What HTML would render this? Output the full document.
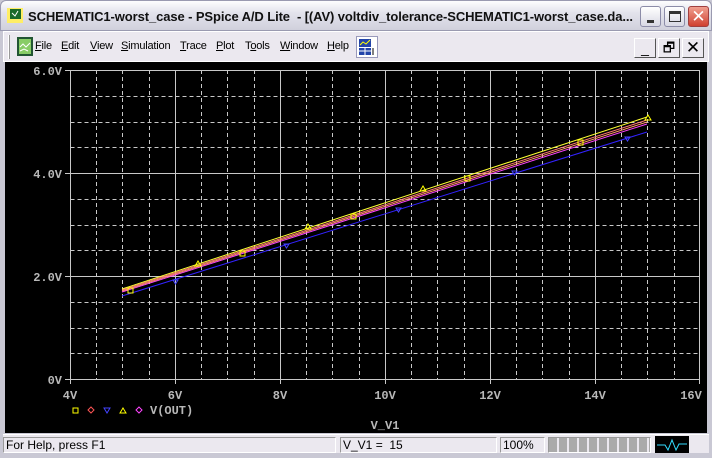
<!DOCTYPE html>
<html><head><meta charset="utf-8"><style>
*{margin:0;padding:0;box-sizing:border-box}
body{width:712px;height:456px;overflow:hidden;background:#c9c8d4;font-family:"Liberation Sans",sans-serif;position:relative}
.title{position:absolute;left:0;top:0;width:712px;height:31px;background:linear-gradient(#fdfdfe,#e3e3ec 40%,#d0d0dc);border-radius:6px 6px 0 0;border:1px solid #9a9ab0}
.title span{position:absolute;left:27px;top:8px;font-size:13px;font-weight:bold;color:#111;white-space:nowrap;letter-spacing:-0.1px}
.tb{position:absolute;top:5px;width:21px;height:21px;border:1px solid #8c8ca8;border-radius:3px;background:linear-gradient(#fff,#d8d8e4)}
.menu{position:absolute;left:3px;top:31px;width:706px;height:31px;background:#ebe8ef;border:1px solid #fff}
.menu .it{position:absolute;top:8px;font-size:11px;color:#000;letter-spacing:-0.2px}
.mb{position:absolute;top:6px;width:22px;height:20px;background:#ebe8ef;border:1px solid;border-color:#fff #555 #555 #fff;font-size:14px;text-align:center;line-height:18px}
.plot{position:absolute;left:5px;top:62px;width:702px;height:371px;background:#000}
.status{position:absolute;left:3px;top:434px;width:706px;height:19px;background:#ebe8ef;border-top:1px solid #fff}
.sp{position:absolute;top:2px;height:16px;border:1px solid;border-color:#999 #fff #fff #999;font-size:12px;padding-left:2px;line-height:14px}
</style></head><body>
<div class="title">
<svg style="position:absolute;left:6px;top:7px" width="18" height="17"><rect x="0" y="0" width="16" height="15" fill="#ffee66"/><rect x="3" y="1" width="11" height="10" fill="#1a6a2a"/><path d="M5 5l3 3 3-5" stroke="#fff" fill="none"/></svg>
<span>SCHEMATIC1-worst_case - PSpice A/D Lite&nbsp; - [(AV) voltdiv_tolerance-SCHEMATIC1-worst_case.da...</span>
<div class="tb" style="left:639px"><div style="position:absolute;left:6px;top:13px;width:7px;height:3px;background:#333"></div></div>
<div class="tb" style="left:663px"><div style="position:absolute;left:4px;top:4px;width:12px;height:11px;border:1px solid #333;border-top-width:3px"></div></div>
<div class="tb" style="left:687px;background:linear-gradient(#f0a090,#d04030);border-color:#a04040;color:#fff;font-size:17px;text-align:center;line-height:19px">✕</div>
</div>
<div class="menu">
<div style="position:absolute;left:4px;top:3px;width:2px;height:24px;border-left:1px solid #fff;border-right:1px solid #999"></div>
<svg style="position:absolute;left:13px;top:5px" width="18" height="20"><rect x="0" y="0" width="16" height="19" fill="#225533"/><rect x="2" y="2" width="12" height="15" fill="#88cc66"/><path d="M3 10l3-3 3 3 4-4M3 14l4-2 4 2" stroke="#fff" fill="none"/></svg>
<span class="it" style="left:31px"><u>F</u>ile</span>
<span class="it" style="left:57px"><u>E</u>dit</span>
<span class="it" style="left:86px"><u>V</u>iew</span>
<span class="it" style="left:117px"><u>S</u>imulation</span>
<span class="it" style="left:176px"><u>T</u>race</span>
<span class="it" style="left:212px"><u>P</u>lot</span>
<span class="it" style="left:241px">T<u>o</u>ols</span>
<span class="it" style="left:276px"><u>W</u>indow</span>
<span class="it" style="left:323px"><u>H</u>elp</span>
<div style="position:absolute;left:352px;top:4px;width:22px;height:22px;background:#fff;border:1px solid #99b"><svg width="20" height="20"><rect x="2" y="2" width="12" height="8" fill="#2244aa"/><path d="M3 8l3-3 3 2 4-4" stroke="#ff0" fill="none"/><rect x="2" y="11" width="12" height="7" fill="#2244aa"/><path d="M2 14h12M8 11v7" stroke="#fff"/><path d="M16 11v7" stroke="#000"/></svg></div>
<div class="mb" style="left:630px">_</div>
<div class="mb" style="left:654px;font-size:13px">🗗</div>
<div class="mb" style="left:678px;font-size:17px">✕</div>
</div>
<div class="plot">
<svg width="702" height="371" style="position:absolute;left:-5px;top:-62px;overflow:visible" font-family="Liberation Mono,monospace" font-weight="bold" font-size="12" fill="#b8b8b8">
<g stroke="#c8c8c8" stroke-dasharray="4,3" stroke-width="1">
<path d="M70.5 96.5H699M70.5 122.5H699M70.5 147.5H699M70.5 199.5H699M70.5 225.5H699M70.5 250.5H699M70.5 302.5H699M70.5 328.5H699M70.5 353.5H699"/>
<path d="M96.5 70V379M122.5 70V379M149.5 70V379M201.5 70V379M227.5 70V379M254.5 70V379M306.5 70V379M332.5 70V379M359.5 70V379M411.5 70V379M437.5 70V379M464.5 70V379M516.5 70V379M542.5 70V379M569.5 70V379M621.5 70V379M647.5 70V379M674.5 70V379"/>
</g>
<g stroke="#c8c8c8" stroke-width="1" fill="none">
<rect x="70.5" y="70.5" width="629" height="309"/>
<path d="M175.5 70V379M280.5 70V379M385.5 70V379M490.5 70V379M595.5 70V379M70 173.5H699M70 276.5H699"/>
<path d="M65 70.5H70M65 173.5H70M65 276.5H70M65 379.5H70M70.5 379V384M175.5 379V384M280.5 379V384M385.5 379V384M490.5 379V384M595.5 379V384M699.5 379V384"/>
</g>
<text x="62" y="75" text-anchor="end">6.0V</text>
<text x="62" y="178" text-anchor="end">4.0V</text>
<text x="62" y="281" text-anchor="end">2.0V</text>
<text x="62" y="384" text-anchor="end">0V</text>
<text x="70" y="399" text-anchor="middle">4V</text>
<text x="175" y="399" text-anchor="middle">6V</text>
<text x="280" y="399" text-anchor="middle">8V</text>
<text x="385" y="399" text-anchor="middle">10V</text>
<text x="490" y="399" text-anchor="middle">12V</text>
<text x="595" y="399" text-anchor="middle">14V</text>
<text x="691" y="399" text-anchor="middle">16V</text>
<text x="150" y="414">V(OUT)</text>
<text x="385" y="429" text-anchor="middle">V_V1</text>
<g fill="none" stroke-width="1">
<rect x="73" y="408" width="5" height="5" stroke="#ff0"/>
<path d="M91 407l3 3-3 3-3-3z" stroke="#f55"/>
<path d="M104 408h6l-3 5z" stroke="#44f"/>
<path d="M123 408l3 5h-6z" stroke="#ff0"/>
<path d="M139 407l3 3-3 3-3-3z" stroke="#f4f"/>
<path d="M122 296L647 132" stroke="#3322ff"/>
<path d="M122 292L647 124" stroke="#ff44ff"/>
<path d="M122 291L647 122" stroke="#ff9966"/>
<path d="M122 290L647 120" stroke="#ff7777"/>
<path d="M122 289L647 117" stroke="#ffff33"/>
<rect x="128" y="288" width="5" height="5" stroke="#ff0"/>
<rect x="240" y="251" width="5" height="5" stroke="#ff0"/>
<rect x="351" y="214" width="5" height="5" stroke="#ff0"/>
<rect x="465" y="176" width="5" height="5" stroke="#ff0"/>
<rect x="578" y="140" width="5" height="5" stroke="#ff0"/>
<path d="M195 266l3-5 3 5z" stroke="#ff0"/>
<path d="M305 229l3-5 3 5z" stroke="#ff0"/>
<path d="M420 191l3-5 3 5z" stroke="#ff0"/>
<path d="M645 120l3-5 3 5z" stroke="#ff0"/>
<path d="M173 280h5l-2.5 4z" stroke="#44f"/>
<path d="M284 244h5l-2.5 4z" stroke="#44f"/>
<path d="M396 208h5l-2.5 4z" stroke="#44f"/>
<path d="M512 171h5l-2.5 4z" stroke="#44f"/>
<path d="M625 137h5l-2.5 4z" stroke="#44f"/>
</g>
</svg>
</div>
<div class="status">
<div class="sp" style="left:0;width:333px">For Help, press F1</div>
<div class="sp" style="left:337px;width:157px">V_V1 =&nbsp; 15</div>
<div class="sp" style="left:497px;width:45px">100%</div>
<div class="sp" style="left:545px;width:103px;background:repeating-linear-gradient(90deg,#aaa 0 8px,#ebe8ef 8px 10px)"></div>
<div style="position:absolute;left:652px;top:1px;width:34px;height:17px;background:#000"><svg width="34" height="17"><path d="M2 9h8l3 5 4-10 4 10 3-6h8" stroke="#33ddff" fill="none"/></svg></div>
</div>
</body></html>
